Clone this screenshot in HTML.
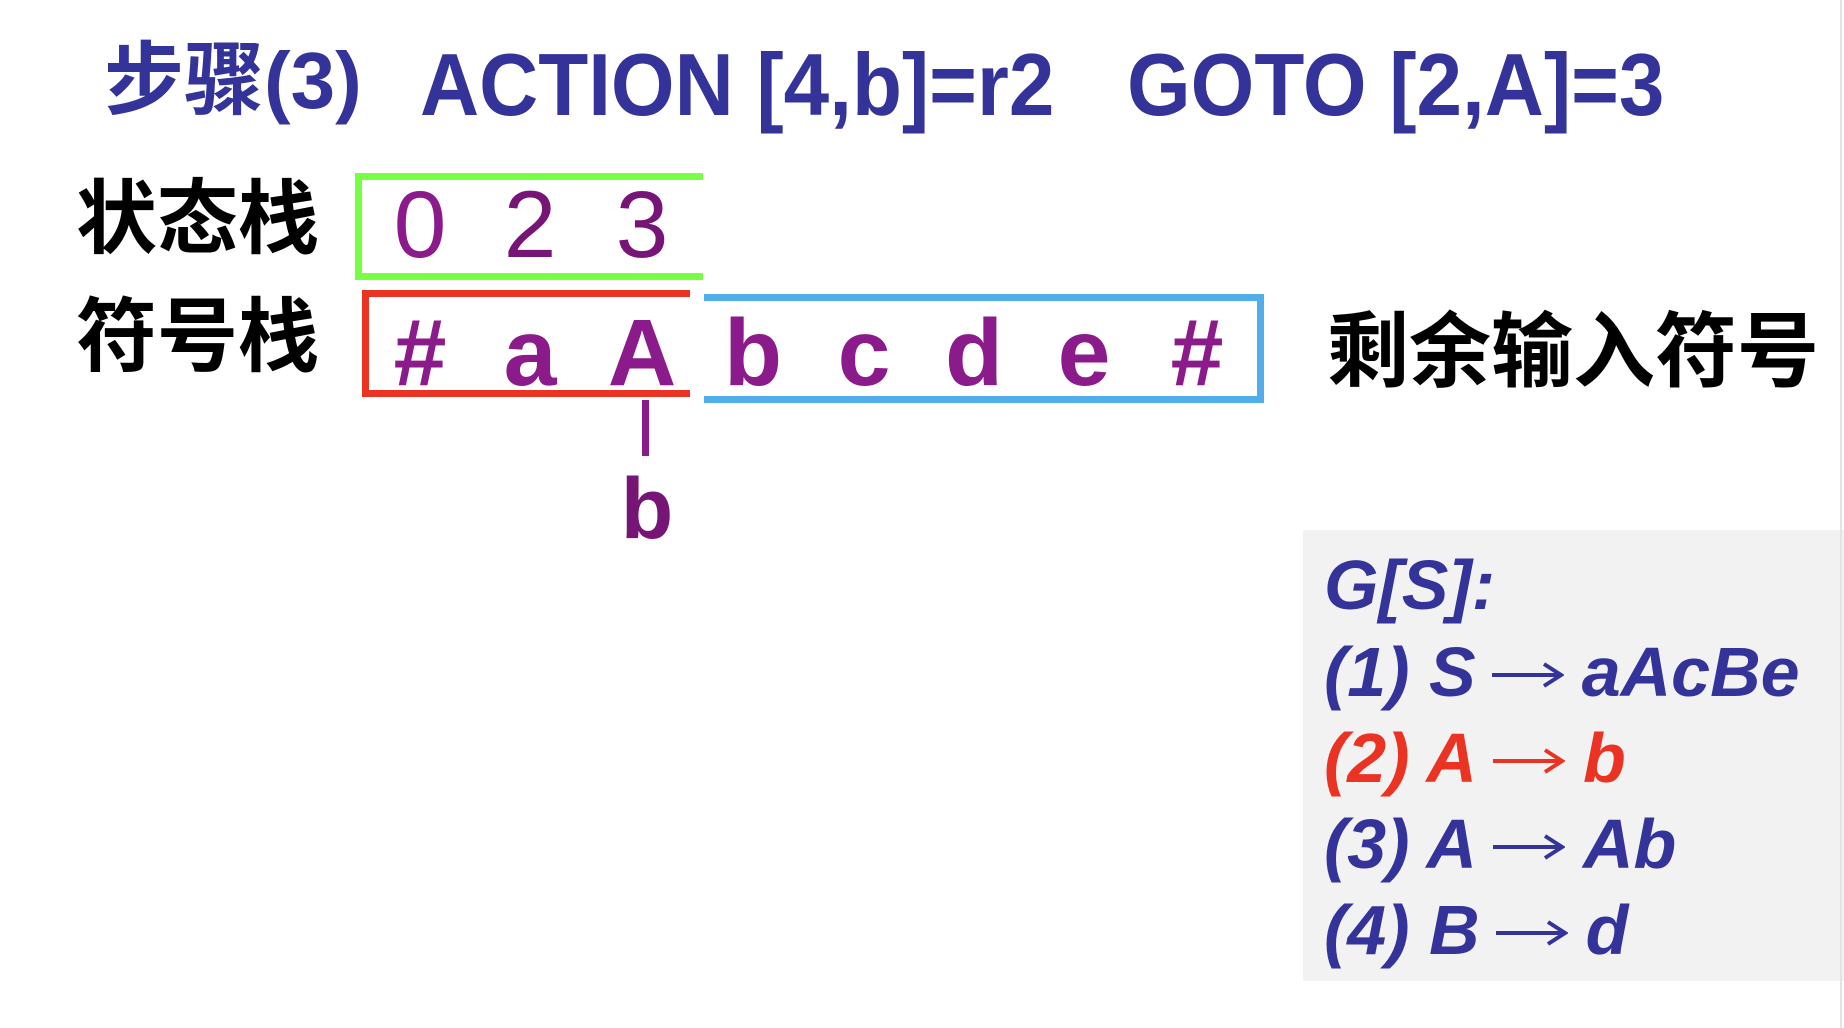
<!DOCTYPE html>
<html><head><meta charset="utf-8"><style>
html,body{margin:0;padding:0;width:1844px;height:1028px;background:#fff;overflow:hidden;position:relative}
.t{position:absolute;white-space:nowrap;line-height:1;font-family:"Liberation Sans","Noto Sans CJK SC",sans-serif}
.b{font-weight:bold}
.c{width:100px;text-align:center}
.box{position:absolute;box-sizing:border-box}
.g{font-weight:bold;font-style:italic;color:#333399;font-size:70px}
.ar{display:inline-block;width:72px;height:30px;margin:0 18px 0 16px;vertical-align:0.08em}
.sx{transform-origin:0 0;transform:scaleX(0.93)}
</style></head><body>
<div class="t b" style="left:104px;top:41px;font-size:80px;color:#333399">步骤(3)</div>
<div class="t b sx" style="left:420px;top:41px;font-size:88px;color:#333399">ACTION [4,b]=r2</div>
<div class="t b sx" style="left:1127px;top:41px;font-size:88px;color:#333399">GOTO [2,A]=3</div>

<div class="t b" style="left:76px;top:180px;font-size:81px;color:#000">状态栈</div>
<div class="t b" style="left:76px;top:298px;font-size:81px;color:#000">符号栈</div>
<div class="t b" style="left:1327px;top:312px;font-size:82px;color:#000">剩余输入符号</div>

<div class="box" style="left:355px;top:173px;width:348px;height:107px;border:7px solid #77ff44;border-right:none"></div>
<div class="box" style="left:362px;top:290px;width:328px;height:107px;border:7px solid #ea3323;border-right:none"></div>
<div class="box" style="left:704px;top:294px;width:560px;height:109px;border:7px solid #52aeea;border-left:none"></div>
<div style="position:absolute;left:642px;top:400px;width:7px;height:56px;background:#8b1a8b"></div>

<div class="t c" style="left:370px;top:178px;font-size:95px;color:#8b1a8b">0</div>
<div class="t c" style="left:480px;top:178px;font-size:95px;color:#771577">2</div>
<div class="t c" style="left:592px;top:178px;font-size:95px;color:#771577">3</div>

<div class="t b c" style="left:370px;top:306px;font-size:95px;color:#8b1a8b">#</div>
<div class="t b c" style="left:480px;top:306px;font-size:95px;color:#8b1a8b">a</div>
<div class="t b c" style="left:592px;top:306px;font-size:95px;color:#8b1a8b">A</div>
<div class="t b c" style="left:703px;top:306px;font-size:95px;color:#8b1a8b">b</div>
<div class="t b c" style="left:814px;top:306px;font-size:95px;color:#8b1a8b">c</div>
<div class="t b c" style="left:924px;top:306px;font-size:95px;color:#8b1a8b">d</div>
<div class="t b c" style="left:1034px;top:306px;font-size:95px;color:#8b1a8b">e</div>
<div class="t b c" style="left:1147px;top:306px;font-size:95px;color:#8b1a8b">#</div>
<div class="t b c" style="left:597px;top:466px;font-size:86px;color:#771577">b</div>

<div class="box" style="left:1303px;top:530px;width:541px;height:451px;background:#f2f2f2"></div>
<div style="position:absolute;left:1840px;top:0;width:2px;height:1028px;background:#e4e4e4"></div>
<div class="t g" style="left:1324px;top:550px">G[S]:</div>
<div class="t g" style="left:1324px;top:637px">(1) S<svg class="ar" viewBox="0 0 72 30"><path d="M0 15H68M52 4L69 15L52 26" fill="none" stroke="#333399" stroke-width="4"/></svg>aAcBe</div>
<div class="t g" style="left:1324px;top:723px;color:#ea3323">(2) A<svg class="ar" viewBox="0 0 72 30"><path d="M0 15H68M52 4L69 15L52 26" fill="none" stroke="#ea3323" stroke-width="4"/></svg>b</div>
<div class="t g" style="left:1324px;top:809px">(3) A<svg class="ar" viewBox="0 0 72 30"><path d="M0 15H68M52 4L69 15L52 26" fill="none" stroke="#333399" stroke-width="4"/></svg>Ab</div>
<div class="t g" style="left:1324px;top:895px">(4) B<svg class="ar" viewBox="0 0 72 30"><path d="M0 15H68M52 4L69 15L52 26" fill="none" stroke="#333399" stroke-width="4"/></svg>d</div>
</body></html>
